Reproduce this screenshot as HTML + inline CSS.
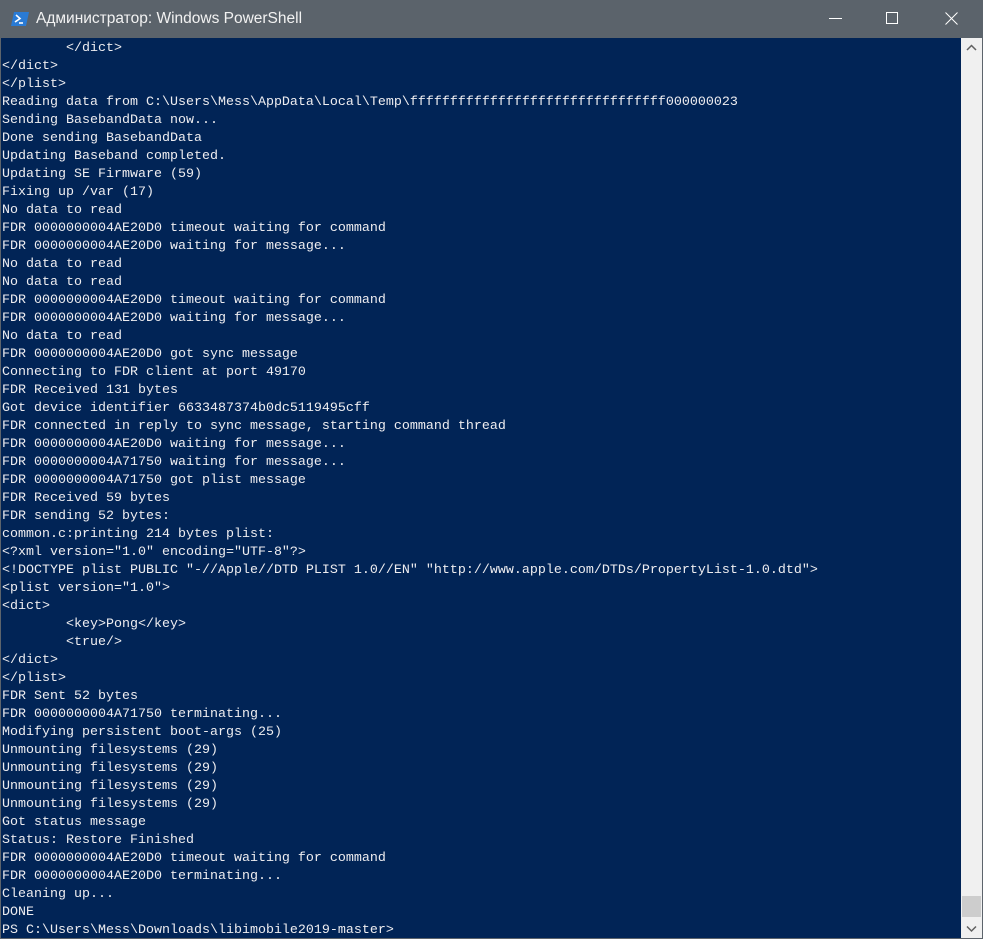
<!DOCTYPE html>
<html><head><meta charset="utf-8"><style>
html,body{margin:0;padding:0;width:983px;height:939px;overflow:hidden;background:#5d646c}
.title{position:absolute;left:0;top:0;width:983px;height:38px;background:#5b636b;color:#fff;font:16px "Segoe UI","Liberation Sans","DejaVu Sans",sans-serif}
.title .t{position:absolute;left:36px;top:10px;font-size:15.5px;color:#f2f2f2}
.term{position:absolute;left:1px;top:38px;width:960px;height:900px;background:#012456;overflow:hidden}
pre{margin:0;padding-left:1px;padding-top:2px;font:13.33px/18px "Liberation Mono",monospace;color:#eeedf0;white-space:pre}
.sb{position:absolute;left:961px;top:38px;width:21px;height:900px;background:#f0f0f0}
.thumb{position:absolute;left:962px;top:896px;width:19px;height:21px;background:#cdcdcd}
</style></head><body>
<div class="title">
<svg style="position:absolute;left:11px;top:11px" width="18" height="16" viewBox="0 0 18 16"><path d="M3 1H18L15 15H0Z" fill="#2a7bd5"/><path d="M5 4L9 7.5L4 11" stroke="#fff" stroke-width="1.6" fill="none"/><path d="M8 12H12" stroke="#fff" stroke-width="1.6"/></svg>
<span class="t">Администратор: Windows PowerShell</span>
<svg style="position:absolute;left:829px;top:18px" width="14" height="2"><rect width="13" height="1" fill="#fff"/></svg>
<svg style="position:absolute;left:886px;top:12px" width="14" height="14"><rect x="0.5" y="0.5" width="11" height="11" fill="none" stroke="#fff"/></svg>
<svg style="position:absolute;left:945px;top:12px" width="14" height="14"><path d="M0.5 0.5L12.5 12.5M12.5 0.5L0.5 12.5" stroke="#fff"/></svg>
</div>
<div class="term"><pre>        &lt;/dict&gt;
&lt;/dict&gt;
&lt;/plist&gt;
Reading data from C:\Users\Mess\AppData\Local\Temp\ffffffffffffffffffffffffffffffff000000023
Sending BasebandData now...
Done sending BasebandData
Updating Baseband completed.
Updating SE Firmware (59)
Fixing up /var (17)
No data to read
FDR 0000000004AE20D0 timeout waiting for command
FDR 0000000004AE20D0 waiting for message...
No data to read
No data to read
FDR 0000000004AE20D0 timeout waiting for command
FDR 0000000004AE20D0 waiting for message...
No data to read
FDR 0000000004AE20D0 got sync message
Connecting to FDR client at port 49170
FDR Received 131 bytes
Got device identifier 6633487374b0dc5119495cff
FDR connected in reply to sync message, starting command thread
FDR 0000000004AE20D0 waiting for message...
FDR 0000000004A71750 waiting for message...
FDR 0000000004A71750 got plist message
FDR Received 59 bytes
FDR sending 52 bytes:
common.c:printing 214 bytes plist:
&lt;?xml version="1.0" encoding="UTF-8"?&gt;
&lt;!DOCTYPE plist PUBLIC "-//Apple//DTD PLIST 1.0//EN" "http://www.apple.com/DTDs/PropertyList-1.0.dtd"&gt;
&lt;plist version="1.0"&gt;
&lt;dict&gt;
        &lt;key&gt;Pong&lt;/key&gt;
        &lt;true/&gt;
&lt;/dict&gt;
&lt;/plist&gt;
FDR Sent 52 bytes
FDR 0000000004A71750 terminating...
Modifying persistent boot-args (25)
Unmounting filesystems (29)
Unmounting filesystems (29)
Unmounting filesystems (29)
Unmounting filesystems (29)
Got status message
Status: Restore Finished
FDR 0000000004AE20D0 timeout waiting for command
FDR 0000000004AE20D0 terminating...
Cleaning up...
DONE
PS C:\Users\Mess\Downloads\libimobile2019-master&gt;</pre></div>
<div class="sb"></div>
<div class="thumb"></div>
<svg style="position:absolute;left:966px;top:44px" width="12" height="8"><path d="M1 6L5.5 1.5L10 6" stroke="#606060" stroke-width="1.5" fill="none"/></svg>
<svg style="position:absolute;left:966px;top:925px" width="12" height="8"><path d="M1 1.5L5.5 6L10 1.5" stroke="#606060" stroke-width="1.5" fill="none"/></svg>
</body></html>
